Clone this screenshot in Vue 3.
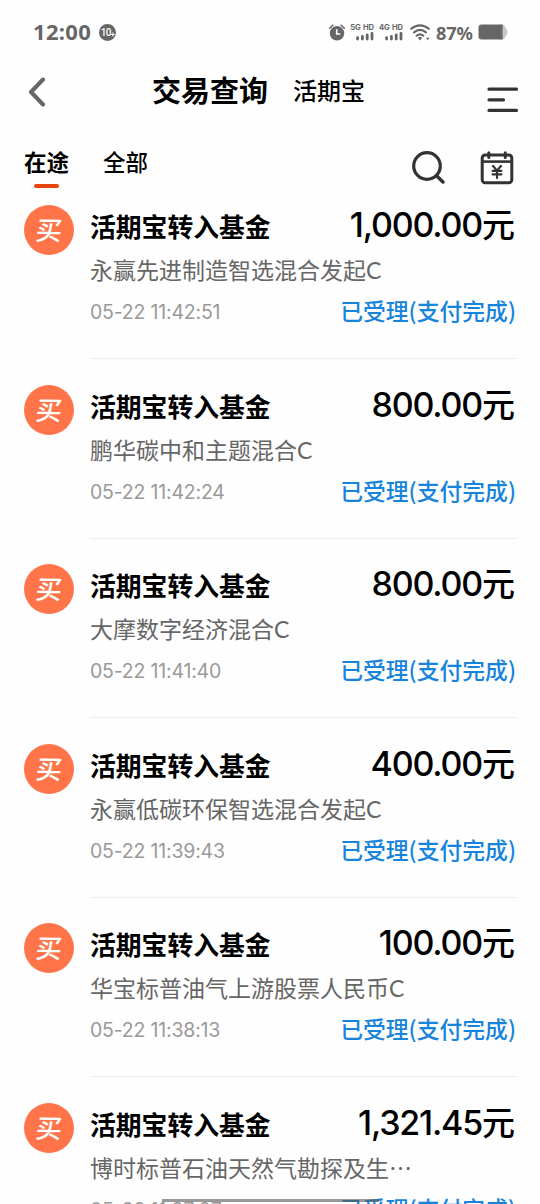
<template>
  <div class="page">
    <!--phone status bar-->
    <div class="status-bar">
      <span class="clock">12:00</span>
      <span class="notice">10<i>+</i></span>
      <div class="status-icons">
        <svg class="alarm" width="16" height="17" viewBox="0 0 16 17">
          <circle cx="8" cy="9.3" r="7.2" fill="#666" />
          <path d="M0.7 4.2 3.8 1.2M15.3 4.2 12.2 1.2" stroke="#666" stroke-width="1.6" stroke-linecap="round" />
          <path d="M7.7 5.3V10H11.3" fill="none" stroke="#fff" stroke-width="1.6" />
        </svg>
        <div v-for="net in networks" :key="net" class="network">
          <span>{{ net }} HD</span>
          <svg width="18" height="9" viewBox="0 0 18 9">
            <path d="M1.6 5.6V7.1M6.4 4.4V7.1M11.2 2.8V7.1M16 1.5V7.1" stroke="#666" stroke-width="2.8" stroke-linecap="round" />
          </svg>
        </div>
        <svg class="wifi" width="20" height="17" viewBox="0 0 20 17">
          <g fill="none" stroke="#666" stroke-width="2.1" stroke-linecap="round">
            <path d="M1.2 4.8Q10-2.2 18.8 4.8" />
            <path d="M4 8.3Q10 3.6 16 8.3" />
            <path d="M6.6 11.7Q10 9 13.4 11.7" />
          </g>
          <path d="M7.6 13.6Q10 12.2 12.4 13.6L10 16.4ZM16 13.8H19.6L17.8 16.2Z" fill="#666" />
        </svg>
        <span class="percent">87%</span>
        <svg class="battery" width="30" height="16" viewBox="0 0 30 16">
          <path d="M22 0.5H24.5Q27 0.5 27.3 4Q29.6 5 29.6 8T27.3 12Q27 15.5 24.5 15.5H22Z" fill="#c6c6c6" />
          <path d="M3.5 0.5H24.6V15.5H3.5Q0.5 15.5 0.5 12.5V3.5Q0.5 0.5 3.5 0.5Z" fill="#666" />
        </svg>
      </div>
    </div>

    <header class="nav-bar">
      <svg class="back" width="18" height="30" viewBox="0 0 18 30">
        <path d="M15 2.5 3 15 15 27.5" fill="none" stroke="#666" stroke-width="4" stroke-linecap="round" stroke-linejoin="round" />
      </svg>
      <h1>交易查询</h1>
      <span class="account">活期宝</span>
      <svg class="menu" width="32" height="26" viewBox="0 0 32 26">
        <path d="M2 2.2H29.5M2 12.8H16.5M2 23.4H29.5" stroke="#333" stroke-width="3.2" stroke-linecap="round" />
      </svg>
    </header>

    <nav class="tabs">
      <button
        v-for="tab in tabs"
        :key="tab"
        class="tab"
        :class="{ active: tab === activeTab }"
        @click="activeTab = tab"
      >
        {{ tab }}
      </button>
      <svg class="search" width="36" height="36" viewBox="0 0 36 36">
        <circle cx="16" cy="18" r="13.3" fill="none" stroke="#333" stroke-width="3.2" />
        <path d="M25.8 28 32 34" stroke="#333" stroke-width="3.4" stroke-linecap="round" />
      </svg>
      <svg class="calendar" width="34" height="34" viewBox="0 0 34 34">
        <g fill="none" stroke="#333" stroke-linecap="round" stroke-linejoin="round">
          <rect x="2.2" y="4" width="29.6" height="27.8" rx="3" stroke-width="3" />
          <path d="M2.5 10.6H31.5" stroke-width="2.6" stroke-linecap="butt" />
          <path d="M8.8 1.8V6.4M25.3 1.8V6.4" stroke-width="3" />
          <path d="M13 15 17 19.6 21 15M17 19.6V27M12.6 19.8H21.4M12.6 23.4H21.4" stroke-width="2.2" />
        </g>
      </svg>
    </nav>

    <!--transaction list-->
    <ul class="trades">
      <li v-for="trade in trades" :key="trade.time" class="trade">
        <span class="badge"><b>买</b></span>
        <div class="trade-body">
          <div class="row">
            <span class="title">活期宝转入基金</span>
            <span class="amount">{{ trade.amount }}<em>元</em></span>
          </div>
          <p class="fund">{{ trade.fund }}</p>
          <div class="row bottom">
            <span class="time">{{ trade.time }}</span>
            <span class="state">已受理(支付完成)</span>
          </div>
        </div>
      </li>
    </ul>
    <div class="home-bar"></div>
  </div>
</template>

<script setup>
import { ref } from 'vue';

const networks = ['5G', '4G'];
const tabs = ['在途', '全部'];
const activeTab = ref('在途');

const trades = ref([
  { fund: '永赢先进制造智选混合发起C', time: '05-22 11:42:51', amount: '1,000.00' },
  { fund: '鹏华碳中和主题混合C', time: '05-22 11:42:24', amount: '800.00' },
  { fund: '大摩数字经济混合C', time: '05-22 11:41:40', amount: '800.00' },
  { fund: '永赢低碳环保智选混合发起C', time: '05-22 11:39:43', amount: '400.00' },
  { fund: '华宝标普油气上游股票人民币C', time: '05-22 11:38:13', amount: '100.00' },
  { fund: '博时标普石油天然气勘探及生⋯', time: '05-22 11:37:37', amount: '1,321.45' },
]);
</script>

<style>
body {
  margin: 0;
  background: #fefefe;
}
</style>

<style scoped>
.page {
  position: relative;
  width: 540px;
  height: 1204px;
  overflow: hidden;
  background: #fefefe;
  color: #000;
  font-family: Lato, "Noto Sans CJK SC", sans-serif;
}

.status-bar {
  display: flex;
  align-items: center;
  box-sizing: border-box;
  height: 64px;
  padding: 0 32px 0 33px;
  color: #666;
}

.clock {
  width: 57px;
  font: 700 22px/30px "Noto Sans", sans-serif;
  letter-spacing: 0.3px;
  white-space: nowrap;
  transform: translateY(-1px);
}

.notice {
  display: flex;
  align-items: center;
  justify-content: center;
  width: 17px;
  height: 17px;
  margin-left: 9px;
  border-radius: 50%;
  background: #666;
  color: #fff;
  font: 500 10px/17px Roboto, sans-serif;
  letter-spacing: -0.5px;
}

.notice i {
  align-self: flex-end;
  font: 700 7px/11px Roboto, sans-serif;
}

.status-icons {
  display: flex;
  align-items: center;
  margin-left: auto;
}

.network {
  display: flex;
  flex-direction: column;
  align-items: flex-end;
  width: 24px;
  margin-left: 5px;
}

.network span {
  font: 700 7.6px/9px Inter, sans-serif;
  letter-spacing: -0.1px;
  word-spacing: 0.8px;
  white-space: nowrap;
}

.network svg {
  display: block;
}

.wifi {
  margin-left: 7px;
}

.percent {
  width: 37px;
  margin: 2px 0 0 6px;
  font: 700 18.2px/24px "Noto Sans", sans-serif;
  letter-spacing: -0.1px;
}

.battery {
  margin-left: 5px;
}

.nav-bar {
  display: flex;
  align-items: center;
  height: 64px;
  padding: 0 21px 0 28px;
}

.back {
  margin-bottom: 8px;
}

h1 {
  margin: 0 0 10px 106px;
  font-size: 29px;
  font-weight: 700;
  line-height: 40px;
}

.account {
  margin: 0 0 10px 25px;
  font-size: 24px;
  font-weight: 500;
  line-height: 36px;
}

.menu {
  margin: 7px 0 0 auto;
}

.tabs {
  display: flex;
  align-items: center;
  height: 76px;
  padding: 0 26px 0 24px;
}

.tab {
  display: flex;
  flex-direction: column;
  align-items: center;
  height: 54px;
  margin-right: 34px;
  padding: 0;
  border: none;
  background: none;
  color: #000;
  font: 500 22.5px/45px "Noto Sans CJK SC", sans-serif;
}

.tab.active {
  font-weight: 700;
}

.tab.active::after {
  content: "";
  width: 25px;
  height: 4px;
  border-radius: 2px;
  background: #e8450f;
}

.search {
  margin-left: auto;
}

.calendar {
  margin: 3px 0 0 33px;
}

.trades {
  margin: 0;
  padding: 0;
  list-style: none;
}

.trade {
  display: flex;
  height: 179.5px;
  padding: 0 23px 0 24px;
}

.badge {
  display: flex;
  align-items: center;
  justify-content: center;
  width: 50px;
  height: 50px;
  margin: 1px 16px 0 0;
  border-radius: 50%;
  background: #ff7448;
  color: #fff;
}

.badge b {
  font-size: 26px;
  font-weight: 500;
  line-height: 48px;
  transform: rotate(1deg) skewX(-5deg);
}

.trade-body {
  flex: 1;
  box-sizing: border-box;
  height: 155px;
  border-bottom: 1px solid #eee;
}

.row {
  display: flex;
  justify-content: space-between;
  height: 46px;
  line-height: 46px;
  white-space: nowrap;
}

.title {
  font-size: 25.8px;
  font-weight: 700;
  line-height: 47px;
}

.amount {
  margin-right: 2px;
  font: 500 34px/39px Inter, "Noto Sans CJK SC", sans-serif;
  letter-spacing: -1.2px;
}

.amount em {
  font: 500 33px/39px "Noto Sans CJK SC", sans-serif;
  letter-spacing: 0;
}

.fund {
  height: 40px;
  margin: 0;
  color: #666;
  font-size: 23px;
  line-height: 40px;
  white-space: nowrap;
}

.row.bottom {
  height: 42px;
  line-height: 42px;
}

.time {
  color: #999;
  font-family: Inter, sans-serif;
  font-size: 19.5px;
  line-height: 44px;
  letter-spacing: -0.2px;
}

.state {
  margin-right: 1px;
  color: #1784dc;
  font-family: "Noto Sans CJK SC", sans-serif;
  font-size: 22.8px;
  font-weight: 500;
}

.home-bar {
  position: absolute;
  left: 162px;
  bottom: 2px;
  width: 217px;
  height: 3px;
  background: rgba(90, 90, 90, 0.62);
}
</style>
